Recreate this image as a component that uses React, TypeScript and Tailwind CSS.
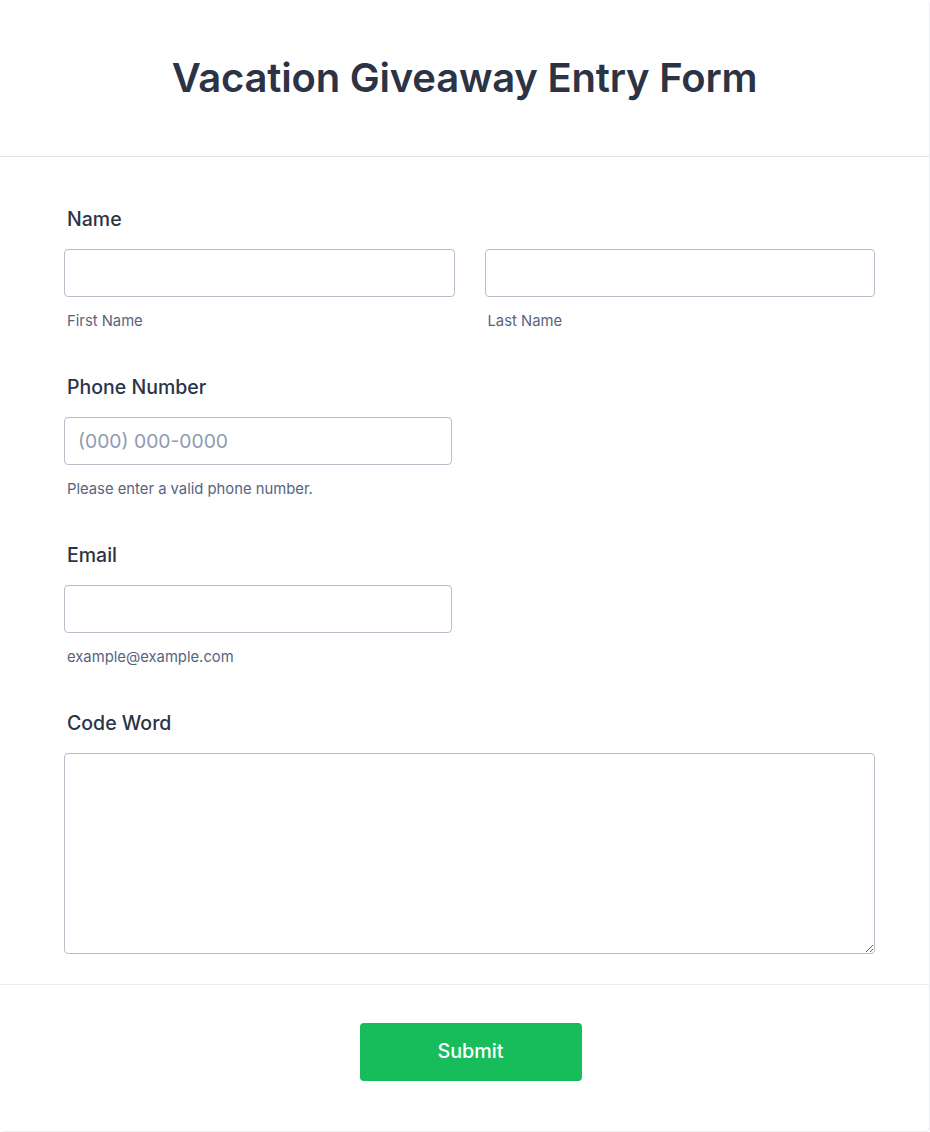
export default function App() {
  const label = "block pl-[3px] text-[19.5px] font-medium leading-[22px] text-[#2c3345]";
  const input =
    "block h-[48px] w-full rounded-[4px] border border-[#b8bdc9] bg-white px-[13px] text-[19.3px] text-[#2c3345] outline-none placeholder:text-[#8d9bb2]";
  const sub = "mt-[15px] block pl-[3px] text-[14.8px] leading-[18px] text-[#57647e]";

  return (
    <div className="min-h-screen bg-white font-['Inter',sans-serif]">
      <div className="w-[929px] rounded-[4px] bg-white shadow-[1px_1px_1px_rgba(200,205,215,0.35)]">
        {/* header */}
        <div className="flex h-[157px] items-center justify-center border-b border-[#e1e3ea]">
          <h1 className="text-[40px] font-semibold tracking-[-0.2px] text-[#2c3345]">Vacation Giveaway Entry Form</h1>
        </div>

        {/* fields */}
        <div className="pb-[30px] pl-[64px] pr-[54px] pt-[51px]">
          <div>
            <label className={label}>Name</label>
            <div className="mt-[19px] grid grid-cols-2 gap-[30px]">
              <div>
                <input className={input} />
                <span className={sub}>First Name</span>
              </div>
              <div>
                <input className={input} />
                <span className={sub}>Last Name</span>
              </div>
            </div>
          </div>

          <div className="mt-[46px]">
            <label className={label}>Phone Number</label>
            <div className="mt-[19px] w-[388px]">
              <input className={input} placeholder="(000) 000-0000" />
              <span className={sub}>Please enter a valid phone number.</span>
            </div>
          </div>

          <div className="mt-[46px]">
            <label className={label}>Email</label>
            <div className="mt-[19px] w-[388px]">
              <input className={input} />
              <span className={sub}>example@example.com</span>
            </div>
          </div>

          <div className="mt-[46px]">
            <label className={label}>Code Word</label>
            <textarea className="mt-[19px] block h-[201px] w-full rounded-[4px] border border-[#b8bdc9] bg-white p-[13px] text-[18px] outline-none" />
          </div>
        </div>

        {/* footer */}
        <div className="flex justify-center border-t border-[#e8eaef] pb-[50px] pl-[12px] pt-[38px]">
          <button className="h-[58px] w-[222px] rounded-[4px] bg-[#18bd5b] text-[19.8px] font-medium text-white">Submit</button>
        </div>
      </div>
    </div>
  );
}
